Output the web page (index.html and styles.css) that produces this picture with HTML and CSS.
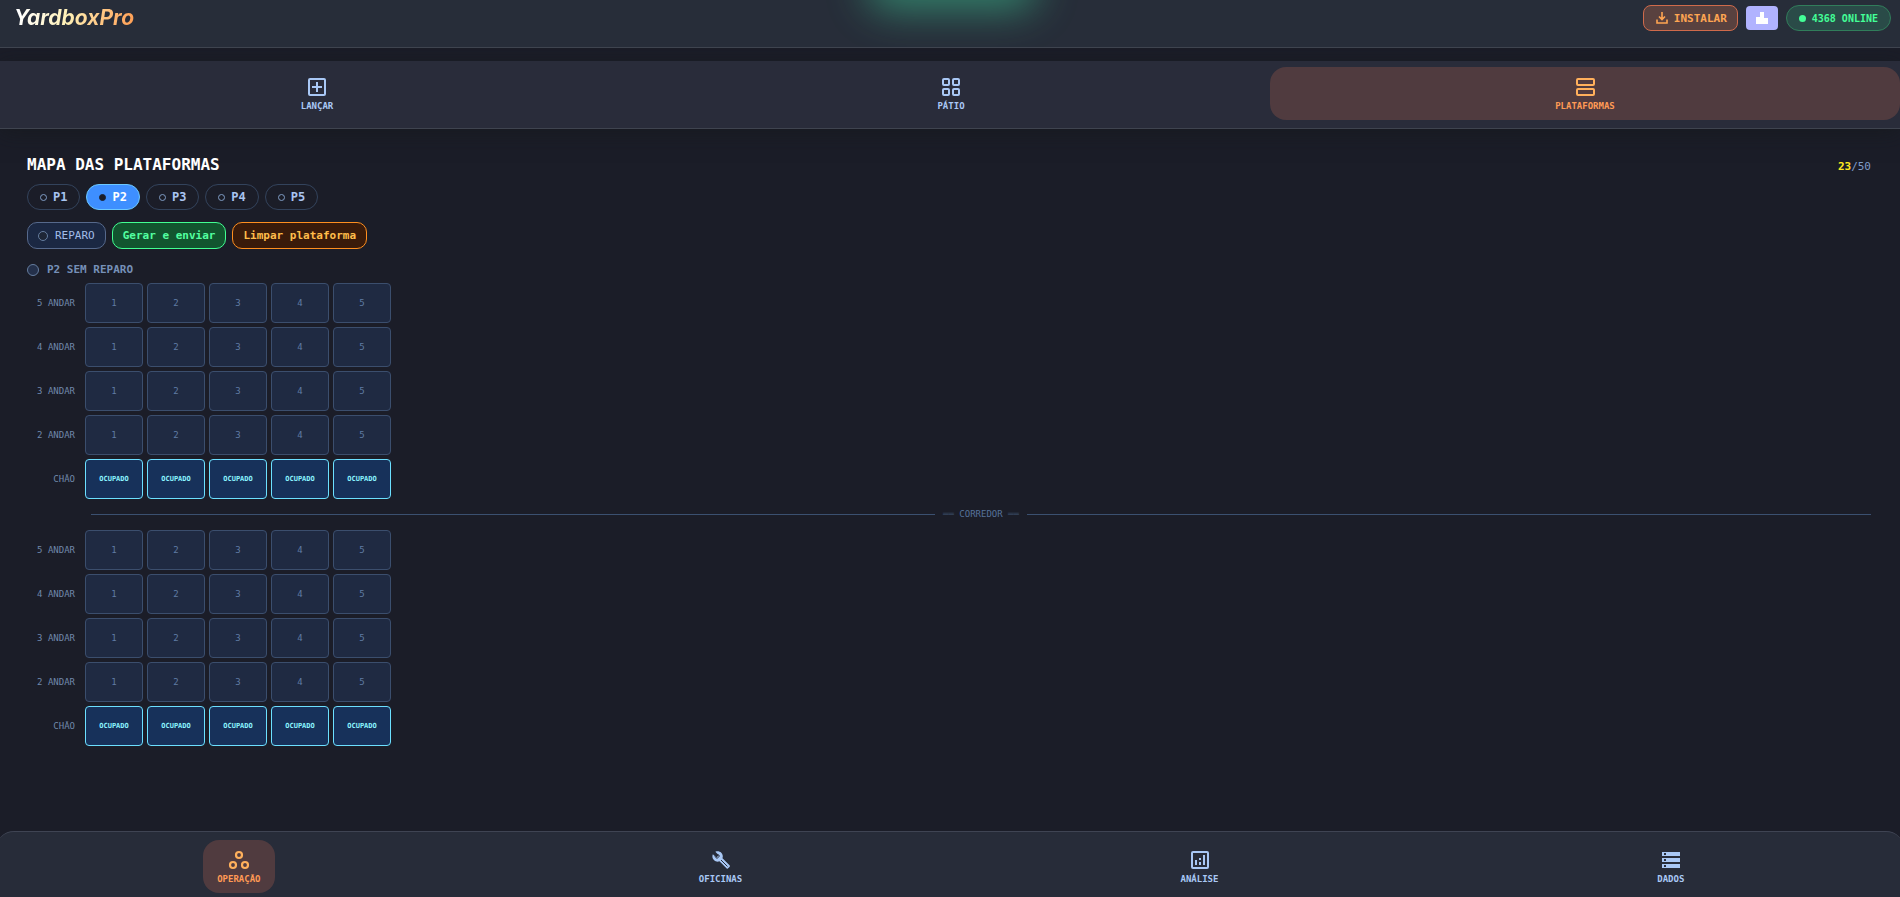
FILE: index.html
```html
<!DOCTYPE html>
<html lang="pt-BR">
<head>
<meta charset="utf-8">
<meta name="viewport" content="width=device-width, initial-scale=1">
<title>YardboxPro</title>
<link rel="stylesheet" href="styles.css">
</head>
<body>
<header class="topbar">
  <div class="logo">YardboxPro</div>
  <div class="topbar-actions">
    <button class="install" type="button">
      <svg class="install-icon" viewBox="0 0 12 12" aria-hidden="true"><path d="M6 0v7M3 4.5 6 7.500l3-3M1 7.500V11h10V7.500" fill="none" stroke="currentColor" stroke-width="1.600"/></svg>
      INSTALAR
    </button>
    <button class="chart-btn" type="button" aria-label="Ranking">
      <svg class="chart-icon" viewBox="0 0 12 12" aria-hidden="true"><path d="M0 5h4V0h4v6h4v6H0z" fill="currentColor"/></svg>
    </button>
    <div class="online"><span class="online-dot"></span>4368 ONLINE</div>
  </div>
</header>

<nav class="tabs" aria-label="Operação">
  <button class="nav-item" type="button">
    <svg class="nav-icon" viewBox="0 0 24 24" aria-hidden="true"><rect x="4" y="4" width="16" height="16" rx="1" fill="none" stroke="currentColor" stroke-width="2"/><path d="M12 7v10M7 12h10" stroke="currentColor" stroke-width="2"/></svg>
    <span>LANÇAR</span>
  </button>
  <button class="nav-item" type="button">
    <svg class="nav-icon" viewBox="0 0 24 24" aria-hidden="true"><g fill="none" stroke="currentColor" stroke-width="2"><rect x="4" y="4" width="6" height="6" rx="1"/><rect x="14" y="4" width="6" height="6" rx="1"/><rect x="4" y="14" width="6" height="6" rx="1"/><rect x="14" y="14" width="6" height="6" rx="1"/></g></svg>
    <span>PÁTIO</span>
  </button>
  <button class="nav-item active" type="button">
    <svg class="nav-icon" viewBox="0 0 24 24" aria-hidden="true"><g fill="none" stroke="currentColor" stroke-width="2"><rect x="4" y="4" width="17" height="6" rx="1"/><rect x="4" y="14" width="17" height="6" rx="1"/></g></svg>
    <span>PLATAFORMAS</span>
  </button>
</nav>

<main class="content">
  <div class="title-row">
    <h1 class="title">MAPA DAS PLATAFORMAS</h1>
    <div class="count"><b class="count-used">23</b>/50</div>
  </div>
  <div class="pills">
    <button class="pill" type="button"><span class="pill-dot"></span>P1</button>
    <button class="pill selected" type="button"><span class="pill-dot"></span>P2</button>
    <button class="pill" type="button"><span class="pill-dot"></span>P3</button>
    <button class="pill" type="button"><span class="pill-dot"></span>P4</button>
    <button class="pill" type="button"><span class="pill-dot"></span>P5</button>
  </div>
  <div class="actions">
    <button class="action repair" type="button"><span class="repair-dot"></span>REPARO</button>
    <button class="action send" type="button">Gerar e enviar</button>
    <button class="action clear" type="button">Limpar plataforma</button>
  </div>
  <div class="status"><span class="status-dot"></span>P2 SEM REPARO</div>

  <section class="rack">
    <div class="row"><span class="floor">5 ANDAR</span><button class="cell" type="button">1</button><button class="cell" type="button">2</button><button class="cell" type="button">3</button><button class="cell" type="button">4</button><button class="cell" type="button">5</button></div>
    <div class="row"><span class="floor">4 ANDAR</span><button class="cell" type="button">1</button><button class="cell" type="button">2</button><button class="cell" type="button">3</button><button class="cell" type="button">4</button><button class="cell" type="button">5</button></div>
    <div class="row"><span class="floor">3 ANDAR</span><button class="cell" type="button">1</button><button class="cell" type="button">2</button><button class="cell" type="button">3</button><button class="cell" type="button">4</button><button class="cell" type="button">5</button></div>
    <div class="row"><span class="floor">2 ANDAR</span><button class="cell" type="button">1</button><button class="cell" type="button">2</button><button class="cell" type="button">3</button><button class="cell" type="button">4</button><button class="cell" type="button">5</button></div>
    <div class="row"><span class="floor">CHÃO</span><button class="cell busy" type="button">OCUPADO</button><button class="cell busy" type="button">OCUPADO</button><button class="cell busy" type="button">OCUPADO</button><button class="cell busy" type="button">OCUPADO</button><button class="cell busy" type="button">OCUPADO</button></div>
  </section>

  <div class="aisle"><span><span class="aisle-mark">══</span> CORREDOR <span class="aisle-mark">══</span></span></div>

  <section class="rack">
    <div class="row"><span class="floor">5 ANDAR</span><button class="cell" type="button">1</button><button class="cell" type="button">2</button><button class="cell" type="button">3</button><button class="cell" type="button">4</button><button class="cell" type="button">5</button></div>
    <div class="row"><span class="floor">4 ANDAR</span><button class="cell" type="button">1</button><button class="cell" type="button">2</button><button class="cell" type="button">3</button><button class="cell" type="button">4</button><button class="cell" type="button">5</button></div>
    <div class="row"><span class="floor">3 ANDAR</span><button class="cell" type="button">1</button><button class="cell" type="button">2</button><button class="cell" type="button">3</button><button class="cell" type="button">4</button><button class="cell" type="button">5</button></div>
    <div class="row"><span class="floor">2 ANDAR</span><button class="cell" type="button">1</button><button class="cell" type="button">2</button><button class="cell" type="button">3</button><button class="cell" type="button">4</button><button class="cell" type="button">5</button></div>
    <div class="row"><span class="floor">CHÃO</span><button class="cell busy" type="button">OCUPADO</button><button class="cell busy" type="button">OCUPADO</button><button class="cell busy" type="button">OCUPADO</button><button class="cell busy" type="button">OCUPADO</button><button class="cell busy" type="button">OCUPADO</button></div>
  </section>
</main>

<nav class="bottom-nav" aria-label="Principal">
  <button class="nav-item active" type="button">
    <svg class="nav-icon" viewBox="0 0 24 24" aria-hidden="true"><g fill="none" stroke="currentColor" stroke-width="2.200"><circle cx="12" cy="7" r="3"/><circle cx="6" cy="17" r="3"/><circle cx="18" cy="17" r="3"/></g></svg>
    <span>OPERAÇÃO</span>
  </button>
  <button class="nav-item" type="button">
    <svg class="nav-icon" viewBox="0 0 24 24" aria-hidden="true"><path transform="translate(2.600 2.400) scale(.8)" d="M22.700 19l-9.100-9.100c.9-2.300.4-5-1.500-6.900-2-2-5-2.400-7.400-1.300L9 6 6 9 1.600 4.700C.4 7.100.9 10.100 2.900 12.100c1.900 1.900 4.600 2.400 6.900 1.500l9.100 9.100c.4.4 1 .4 1.400 0l2.300-2.300c.5-.4.5-1.100.1-1.400z" fill="currentColor"/><path d="M6 8.500 8 10.500 10.500 8 8.500 6M12 12l6.500 6.500" fill="none" stroke="#272c39" stroke-width="1"/></svg>
    <span>OFICINAS</span>
  </button>
  <button class="nav-item" type="button">
    <svg class="nav-icon" viewBox="0 0 24 24" aria-hidden="true"><rect x="4" y="4" width="16" height="16" rx="1" fill="none" stroke="currentColor" stroke-width="2"/><path d="M7 12h2v5H7zM11 14h2v3h-2zM11 10h2v2h-2zM15 7h2v10h-2z" fill="currentColor"/></svg>
    <span>ANÁLISE</span>
  </button>
  <button class="nav-item" type="button">
    <svg class="nav-icon" viewBox="0 0 24 24" aria-hidden="true"><path fill-rule="evenodd" d="M3 4h18v4H3zM5 5v2h2V5zM3 10h18v4H3zM5 11v2h2v-2zM3 16h18v4H3zM5 17v2h2v-2z" fill="currentColor"/></svg>
    <span>DADOS</span>
  </button>
</nav>
</body>
</html>
```

FILE: styles.css
```css
* {
  box-sizing: border-box;
}

body {
  margin: 0;
  min-height: 100vh;
  display: flex;
  flex-direction: column;
  overflow-x: hidden;
  background: #1b1d28;
  color: #a9c4f0;
  font-family: "DejaVu Sans Mono", "Liberation Mono", monospace;
  font-size: 11px;
}

button {
  margin: 0;
  padding: 0;
  border: 0;
  background: none;
  color: inherit;
  font: inherit;
  cursor: pointer;
}

.topbar {
  position: relative;
  overflow: hidden;
  display: flex;
  justify-content: space-between;
  align-items: center;
  padding: 5px 9px 16px 14px;
  border-bottom: 1px solid #3f444f;
  background: #272d39;
}

/* Green halo that spills in from above the window */
.topbar::before {
  content: "";
  position: absolute;
  top: -40px;
  left: 50%;
  width: 160px;
  height: 36px;
  margin-left: -78px;
  border-radius: 18px;
  box-shadow: 0 8px 40px 6px rgba(68, 235, 170, 0.46);
}

.logo {
  font-family: Inter, "Liberation Sans", sans-serif;
  font-size: 21px;
  font-weight: 700;
  font-style: italic;
  line-height: 26px;
  background: linear-gradient(100deg, #ffffff 5%, #fff0b5 45%, #ff9d52 100%);
  -webkit-background-clip: text;
  background-clip: text;
  color: transparent;
}

.topbar-actions {
  display: flex;
  align-items: center;
  gap: 8px;
}

.install {
  display: flex;
  align-items: center;
  gap: 6px;
  height: 26px;
  padding: 0 10px 0 12px;
  border: 1px solid #cf6a4b;
  border-radius: 8px;
  background: #59413f;
  color: #ffa552;
  font-weight: 700;
}

.install-icon,
.chart-icon {
  display: block;
  width: 12px;
  height: 12px;
}

.chart-btn {
  display: grid;
  place-items: center;
  width: 32px;
  height: 24px;
  border-radius: 4px;
  background: #b1b3ff;
  color: #ffffff;
}

.online {
  display: flex;
  align-items: center;
  gap: 6px;
  height: 26px;
  padding: 0 12px;
  border: 1px solid #317d5b;
  border-radius: 13px;
  background: #2a4b48;
  color: #43ff97;
  font-size: 10px;
  font-weight: 700;
}

.online-dot {
  width: 7px;
  height: 7px;
  border-radius: 50%;
  background: #43ff97;
}

.tabs {
  display: grid;
  grid-template-columns: repeat(3, 1fr);
  gap: 4px;
  margin-top: 13px;
  padding: 6px 0 8px 2px;
  border-bottom: 1px solid #3f444f;
  background: #292c3a;
  box-shadow: 0 4px 20px rgba(20, 24, 24, 0.5);
}

.nav-item {
  display: flex;
  flex-direction: column;
  align-items: center;
  gap: 1px;
  min-width: 56px;
  padding: 8px 14px 7px;
  border-radius: 16px;
  color: #a9c8f5;
  font-size: 9px;
  font-weight: 700;
  line-height: 13px;
}

.nav-icon {
  display: block;
  width: 24px;
  height: 24px;
}

.nav-item.active {
  background: #503b3f;
  color: #ff9a55;
}

.nav-item.active .nav-icon {
  color: #ffb05c;
}

.content {
  flex: 1;
  padding: 24px 29px 24px 27px;
}

.title-row {
  display: flex;
  justify-content: space-between;
  align-items: flex-end;
}

.title {
  margin: 0;
  color: #ffffff;
  font-size: 16px;
  line-height: 23px;
}

.count {
  color: #7f9cc8;
  line-height: 18px;
}

.count-used {
  color: #ffe81f;
}

.pills,
.actions {
  display: flex;
  gap: 6px;
}

.pills {
  margin-top: 8px;
}

.pill {
  display: flex;
  align-items: center;
  gap: 6px;
  height: 26px;
  padding: 0 12px;
  border: 1px solid #33435c;
  border-radius: 13px;
  color: #a9c4f0;
  font-size: 12px;
  font-weight: 700;
}

.pill-dot {
  width: 7px;
  height: 7px;
  border: 1px solid #7f9cc4;
  border-radius: 50%;
}

.pill.selected {
  border-color: #6cc8ff;
  background: #3e8fff;
  color: #ffffff;
}

.pill.selected .pill-dot {
  border-color: #1b2334;
  background: #1b1d28;
}

.actions {
  margin-top: 12px;
}

.action {
  display: flex;
  align-items: center;
  gap: 7px;
  height: 27px;
  padding: 0 10px;
  border: 1px solid;
  border-radius: 10px;
}

.repair {
  border-color: #56698c;
  background: #1b2843;
  color: #a3bde8;
}

.repair-dot,
.status-dot {
  border: 1px solid #657d9f;
  border-radius: 50%;
}

.repair-dot {
  width: 10px;
  height: 10px;
  background: #1e2636;
}

.send {
  border-color: #42ff92;
  background: #12552f;
  color: #52ffa0;
  font-weight: 700;
}

.clear {
  border-color: #ff8f1f;
  background: #3a1b0a;
  color: #ffbd4a;
  font-weight: 700;
}

.status {
  display: flex;
  align-items: center;
  gap: 8px;
  margin: 12px 0 4px;
  color: #7690b8;
  font-weight: 700;
  line-height: 18px;
}

.status-dot {
  width: 12px;
  height: 12px;
  background: #24304a;
}

.rack {
  display: grid;
  gap: 4px;
}

.row {
  display: flex;
  align-items: center;
  gap: 4px;
  font-size: 9px;
}

.floor {
  width: 48px;
  margin-right: 6px;
  color: #7088aa;
  text-align: right;
}

.cell {
  width: 58px;
  height: 40px;
  border: 1px solid #3b4e6d;
  border-radius: 4px;
  background: #1f2a42;
  color: #5f7ca4;
}

.cell.busy {
  border-color: #6ce0ff;
  background: #17315a;
  color: #8af4ff;
  font-size: 7px;
  font-weight: 700;
}

.aisle {
  display: flex;
  align-items: center;
  gap: 8px;
  margin: 8px 0 8px 64px;
  color: #56729a;
  font-size: 9px;
  line-height: 15px;
}

.aisle-mark {
  color: #35455e;
}

.aisle::before,
.aisle::after {
  content: "";
  flex: 1;
  height: 1px;
  background: #3b5070;
}

/* Runs slightly past both window edges so only part of each rounded corner shows */
.bottom-nav {
  display: flex;
  justify-content: space-around;
  gap: 8px;
  margin: 0 -4px;
  padding: 8px 4px 4px 6px;
  border-top: 1px solid #3f4453;
  border-radius: 18px 18px 0 0;
  background: #272c39;
}
```
